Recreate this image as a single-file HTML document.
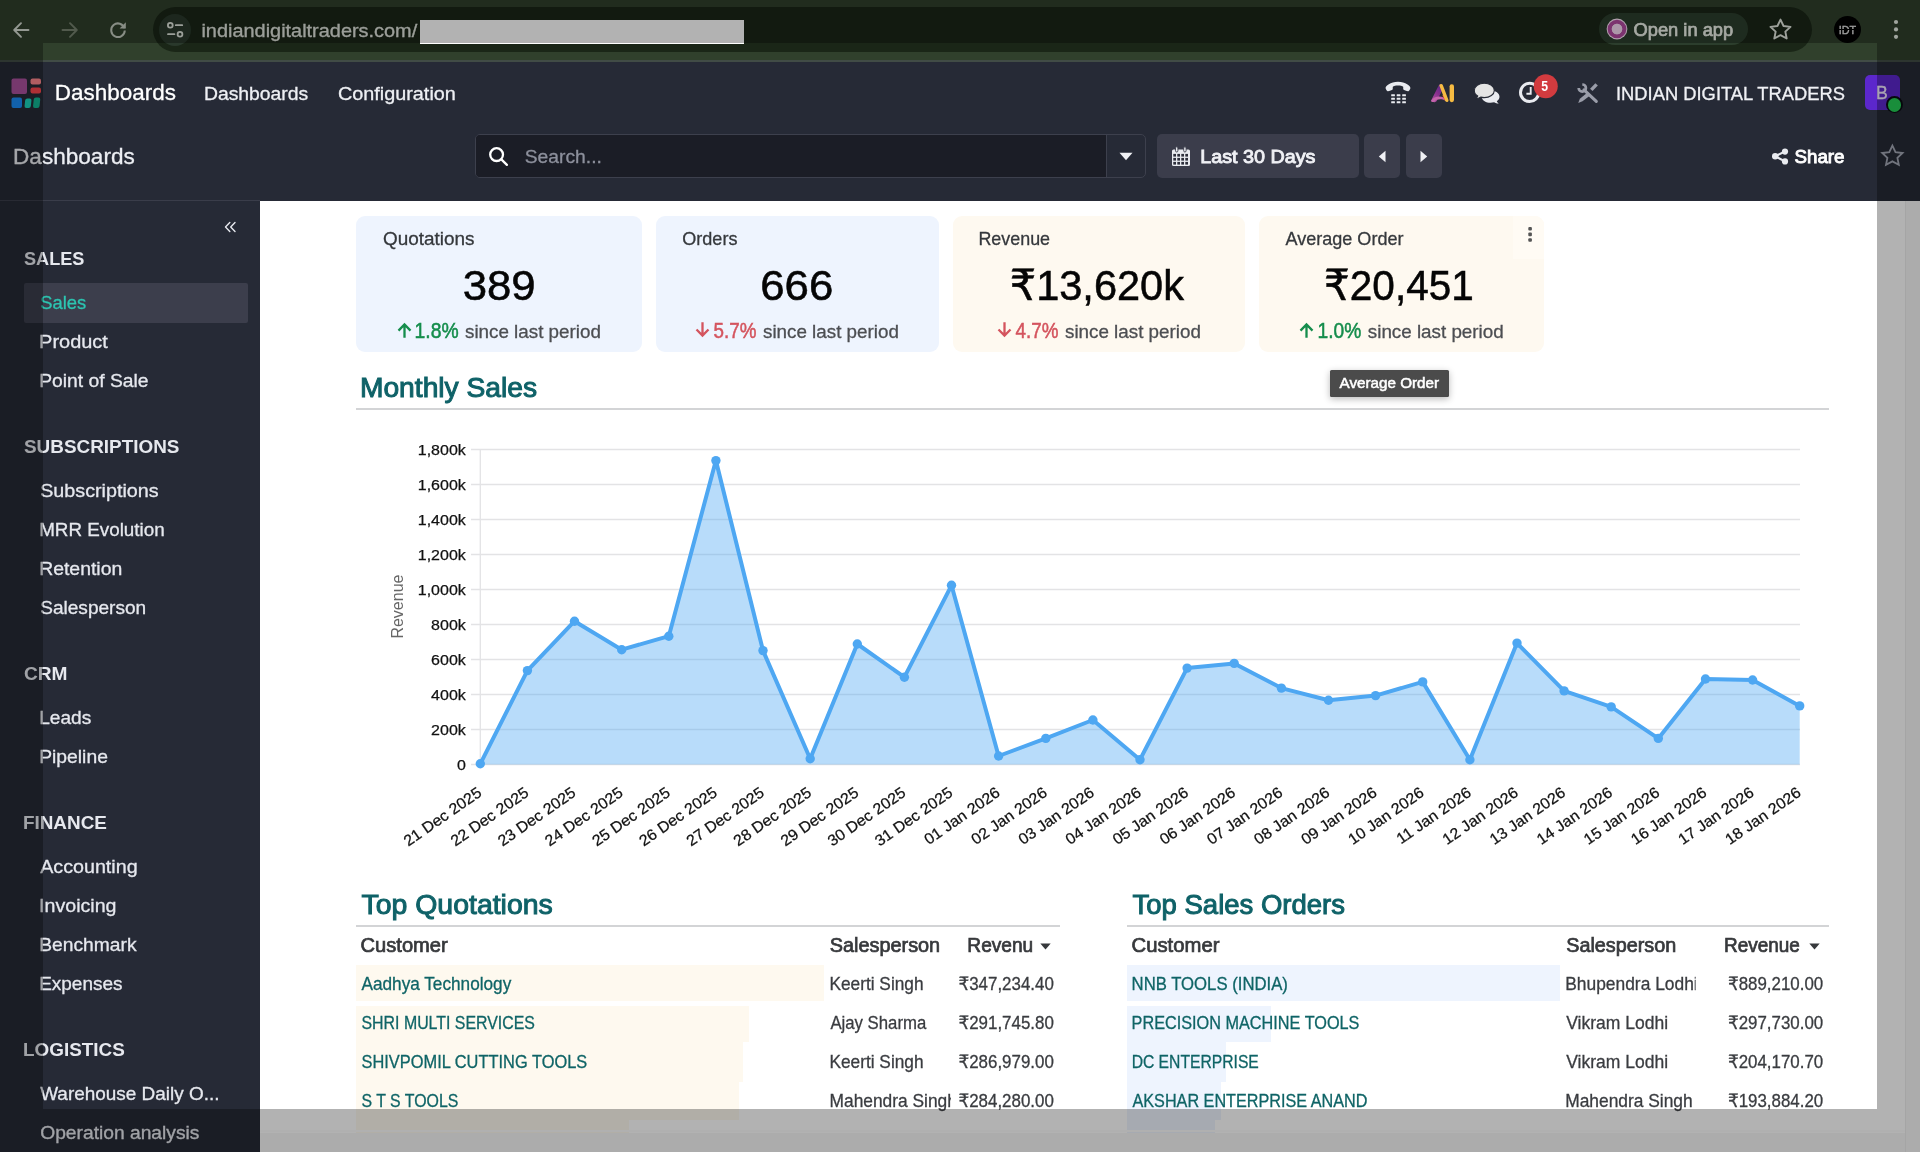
<!DOCTYPE html>
<html lang="en"><head><meta charset="utf-8"><title>Dashboards</title>
<style>
html,body{margin:0;padding:0}
body{width:1920px;height:1152px;overflow:hidden;position:relative;background:#fff;font-family:"Liberation Sans","DejaVu Sans",sans-serif}
.abs{position:absolute}
#txt text{white-space:pre}
svg.g{will-change:transform}
</style></head>
<body>
<div class="abs" style="left:0;top:0;width:1920px;height:61px;background:#30402c"></div>
<div class="abs" style="left:0;top:60px;width:1920px;height:2px;background:#414c46"></div>
<div class="abs" style="left:153px;top:7px;width:1659px;height:45px;border-radius:23px;background:#1a2617"></div>
<div class="abs" style="left:159px;top:14px;width:32px;height:32px;border-radius:16px;background:#2a392c"></div>
<svg class="abs" style="left:159px;top:14px" width="32" height="32" viewBox="0 0 32 32" fill="none" stroke="#dfe4dc" stroke-width="1.8" stroke-linecap="round"><circle cx="11.3" cy="11.2" r="2.4"/><path d="M16.8 11.2h6.4M9 20.2h6.4"/><circle cx="21" cy="20.2" r="2.4"/></svg>
<svg class="abs" style="left:11px;top:19px" width="22" height="22" viewBox="0 0 22 22" fill="none" stroke="#d5dbd2" stroke-width="1.9" stroke-linecap="round" stroke-linejoin="round"><path d="M17.5 11H3.5M10 4.2L3.2 11l6.8 6.8"/></svg>
<svg class="abs" style="left:58px;top:19px" width="22" height="22" viewBox="0 0 22 22" fill="none" stroke="#76826f" stroke-width="1.9" stroke-linecap="round" stroke-linejoin="round"><path d="M4.5 11h14M12 4.2l6.8 6.8-6.8 6.8"/></svg>
<svg class="abs" style="left:105.6px;top:17.9px" width="24" height="24" viewBox="0 0 24 24" fill="none" stroke="#c3cbbf" stroke-width="2" stroke-linecap="butt"><path d="M18.500 10.200A6.800 6.800 0 1 0 18.800 12.500"/><path d="M19.800 4.300v6.200h-6.200z" fill="#c3cbbf" stroke="none"/></svg>
<div class="abs" style="left:420px;top:19.5px;width:323.5px;height:24.5px;background:#fff"></div>
<div class="abs" style="left:1598.5px;top:13.3px;width:149px;height:32px;border-radius:16px;background:#2c3e2d"></div>
<svg class="abs" style="left:1604.6px;top:17.1px" width="24" height="24" viewBox="0 0 24 24"><circle cx="12" cy="12" r="10.4" fill="#fbe6f7"/><circle cx="12" cy="12" r="7.300" fill="none" stroke="#b24a9f" stroke-width="4.100"/><circle cx="12" cy="12" r="5.200" fill="#f6d9f2"/></svg>
<svg class="abs" style="left:1766.6px;top:15.8px" width="27" height="27" viewBox="0 0 24 24" fill="none" stroke="#e2e7df" stroke-width="1.7" stroke-linejoin="round"><path d="M12 3.2l2.7 5.7 6.2.8-4.6 4.2 1.2 6.1L12 17l-5.5 3 1.2-6.1-4.6-4.2 6.2-.8z"/></svg>
<div class="abs" style="left:1833.8px;top:15.5px;width:27.3px;height:27.3px;border-radius:14px;background:#000"></div>
<svg class="abs" style="left:1888.8px;top:17.1px" width="14" height="26" viewBox="0 0 14 26" fill="#e6ede2"><circle cx="7" cy="5" r="2.1"/><circle cx="7" cy="12.400" r="2.1"/><circle cx="7" cy="19.800" r="2.1"/></svg>
<div class="abs" style="left:0;top:62px;width:1920px;height:139px;background:#262a36"></div>
<div class="abs" style="left:0;top:199.9px;width:260px;height:1.7px;background:#3a3d4a"></div>
<svg class="abs" style="left:11px;top:78px" width="30" height="30" viewBox="0 0 30 30">
<rect x="0.5" y="0.5" width="15.5" height="15.5" rx="2" fill="#a9519c"/>
<rect x="19.5" y="0.5" width="10.5" height="6" rx="2" fill="#fc868b"/>
<rect x="19.5" y="9.5" width="10.5" height="6" rx="2" fill="#f9464c"/>
<rect x="0.5" y="19.5" width="10.5" height="10.5" rx="2" fill="#1a8cf5"/>
<rect x="14" y="20.5" width="6.3" height="9.5" rx="2" fill="#1ad3bb" transform="skewX(-6) translate(2.5 0)"/>
<rect x="22.5" y="19.5" width="6.5" height="10.5" rx="2" fill="#12b592" transform="skewX(-6) translate(2.5 0)"/>
</svg>
<div class="abs" style="left:1865.3px;top:75px;width:34.8px;height:35.4px;border-radius:5px;background:#5c27cc"></div>
<div class="abs" style="left:1885.8px;top:96.2px;width:17.2px;height:17.2px;border-radius:9px;background:#0a0c12"></div>
<div class="abs" style="left:1887.6px;top:98px;width:13.6px;height:13.6px;border-radius:7px;background:#25cc55"></div>
<svg class="abs" style="left:1384px;top:80px" width="28" height="25" viewBox="0 0 28 25" fill="#e9ebf0"><path d="M1.6 8.3C1.2 6.2 6.5 1.8 14 1.8s12.8 4.4 12.4 6.5c-.2 1-1.2 2.4-2 2.9-.7.4-4.6-1-5-1.6-.4-.7.1-2.6-.4-3.1-.7-.7-2.8-1.1-5-1.1s-4.300.4-5 1.100c-.5.5 0 2.400-.4 3.100-.4.600-4.300 2-5 1.600-.8-.5-1.800-1.900-2-2.900z"/><rect x="7.2" y="14.2" width="3.7" height="2.1" rx="0.4"/><rect x="12.7" y="14.2" width="3.7" height="2.1" rx="0.4"/><rect x="18.2" y="14.2" width="3.7" height="2.1" rx="0.4"/><rect x="7.2" y="17.7" width="3.7" height="2.1" rx="0.4"/><rect x="12.7" y="17.7" width="3.7" height="2.1" rx="0.4"/><rect x="18.2" y="17.7" width="3.7" height="2.1" rx="0.4"/><rect x="7.2" y="21.2" width="3.7" height="2.1" rx="0.4"/><rect x="12.7" y="21.2" width="3.7" height="2.1" rx="0.4"/><rect x="18.2" y="21.2" width="3.7" height="2.1" rx="0.4"/></svg>
<svg class="abs" style="left:1430px;top:82px" width="26" height="22" viewBox="0 0 26 22">
<defs><linearGradient id="aig" x1="0" y1="1" x2="0.7" y2="0"><stop offset="0" stop-color="#b85aa6"/><stop offset="0.55" stop-color="#8a2f8e"/><stop offset="1" stop-color="#5a2a86"/></linearGradient></defs>
<path d="M1 18.8L9.2 2.6c.5-.9 1.600-.9 2 0l2 4-6.500 12.500c-.6 1-2 1.300-3.200.8-1.200-.5-1.900-.8-2.500-1.100z" fill="url(#aig)"/>
<path d="M1.300 18.500c2.500-3.300 7-5.200 12.500-3l1.800 3.300c-4.800-2.300-8.600-1.700-11.300.9-.9.800-3.800.2-3-1.200z" fill="#c565ab"/>
<path d="M12.300 13.600l2.800 5.300 1.700-.5-2.800-6.600z" fill="#d8433a"/>
<path d="M9.300 3.400c.4-1.600 2.800-2 3.500-.5l5.600 14.800c.4 1.100-.2 2-1.200 2.200-.9.200-1.700-.3-2-1.100z" fill="#f6bb42"/>
<rect x="19.600" y="2.200" width="4.400" height="18" rx="2.100" fill="#f6bb42"/>
</svg>
<svg class="abs" style="left:1473px;top:82px" width="28" height="23" viewBox="0 0 28 23">
<path d="M17.500 8.500c5 0 9 2.700 9 6.300 0 1.800-1 3.400-2.700 4.500.4 1 1.100 1.800 1.900 2.400-1.700 0-3.300-.5-4.600-1.400-1.100.3-2.300.5-3.600.5-4.500 0-8.200-2.300-8.900-5.300z" fill="#e9ebf0"/>
<path d="M11.300 1.200c5.500 0 10 3.200 10 7.200s-4.500 7.200-10 7.200c-1.300 0-2.500-.2-3.600-.5-1.400 1-3.100 1.600-5 1.600.9-.7 1.600-1.600 2-2.700C2.600 12.700 1.300 10.700 1.300 8.400c0-4 4.500-7.200 10-7.200z" fill="#e4e4e4" stroke="#262a36" stroke-width="1.100"/>
</svg>
<svg class="abs" style="left:1517px;top:72px" width="44" height="36" viewBox="0 0 44 36">
<circle cx="12.600" cy="20.400" r="9.100" fill="none" stroke="#e9ebf0" stroke-width="3"/>
<path d="M13.700 15v6.700H9.400" fill="none" stroke="#e9ebf0" stroke-width="1.900"/>
<circle cx="28.750" cy="14.200" r="12" fill="#d23b3f"/>
</svg>
<svg class="abs" style="left:1576px;top:82px" width="24" height="22" viewBox="0 0 24 22" fill="none" stroke="#9a9da9">
<path d="M8 7.800L20.300 19.400" stroke-width="3.100" stroke-linecap="round"/>
<path d="M6.300 2.500A3.600 3.600 0 1 1 2.700 6.100" stroke-width="2.700"/>
<path d="M20.600 2.300l-5.300 5.600" stroke-width="3.400"/>
<path d="M11.800 10.300l3 2.600-8.300 6.300-4.300 1.900 1.700-4.400z" fill="#9a9da9" stroke="none"/>
</svg>
<div class="abs" style="left:475px;top:134px;width:671px;height:44px;border-radius:5px;border:1px solid #3d404d;box-sizing:border-box;background:#262a36"></div>
<div class="abs" style="left:476px;top:135px;width:630px;height:42px;border-radius:4px 0 0 4px;background:#1b1d26"></div>
<div class="abs" style="left:1106px;top:135px;width:1px;height:42px;background:#3d404d"></div>
<svg class="abs" style="left:488px;top:146px" width="21" height="21" viewBox="0 0 21 21" fill="none" stroke="#fff" stroke-width="2.3" stroke-linecap="round"><circle cx="8.6" cy="8.6" r="6.4"/><path d="M13.6 13.6l5.3 5.3"/></svg>
<svg class="abs" style="left:1119px;top:152px" width="14" height="9" viewBox="0 0 14 9" fill="#f0f1f5"><path d="M0.5 0.8h13L7 8.2z"/></svg>
<div class="abs" style="left:1157px;top:134px;width:201.5px;height:44px;border-radius:5px;background:#3b3d4b"></div>
<div class="abs" style="left:1364px;top:134px;width:36px;height:44px;border-radius:5px;background:#3b3d4b"></div>
<div class="abs" style="left:1405.5px;top:134px;width:36px;height:44px;border-radius:5px;background:#3b3d4b"></div>
<svg class="abs" style="left:1378px;top:150px" width="8" height="13" viewBox="0 0 8 13" fill="#f0f1f5"><path d="M7.5 0.7v11.6L0.8 6.5z"/></svg>
<svg class="abs" style="left:1420px;top:150px" width="8" height="13" viewBox="0 0 8 13" fill="#f0f1f5"><path d="M0.5 0.7v11.6L7.2 6.5z"/></svg>
<svg class="abs" style="left:1170px;top:145px" width="22" height="23" viewBox="0 0 22 23"><rect x="2" y="4.500" width="18" height="16.600" rx="1.500" fill="#e9ebf0"/><rect x="5.500" y="1.800" width="2.400" height="5.200" rx="1.200" fill="#e9ebf0" stroke="#3b3d4b" stroke-width="0.900"/><rect x="13.700" y="1.800" width="2.400" height="5.200" rx="1.200" fill="#e9ebf0" stroke="#3b3d4b" stroke-width="0.900"/><rect x="3.3" y="8.9" width="2.700" height="2.700" fill="#2c2e3a"/><rect x="7.3" y="8.9" width="2.700" height="2.700" fill="#2c2e3a"/><rect x="11.3" y="8.9" width="2.700" height="2.700" fill="#2c2e3a"/><rect x="15.3" y="8.9" width="2.700" height="2.700" fill="#2c2e3a"/><rect x="3.3" y="12.9" width="2.700" height="2.700" fill="#2c2e3a"/><rect x="7.3" y="12.9" width="2.700" height="2.700" fill="#2c2e3a"/><rect x="11.3" y="12.9" width="2.700" height="2.700" fill="#2c2e3a"/><rect x="15.3" y="12.9" width="2.700" height="2.700" fill="#2c2e3a"/><rect x="3.3" y="16.9" width="2.700" height="2.700" fill="#2c2e3a"/><rect x="7.3" y="16.9" width="2.700" height="2.700" fill="#2c2e3a"/><rect x="11.3" y="16.9" width="2.700" height="2.700" fill="#2c2e3a"/><rect x="15.3" y="16.9" width="2.700" height="2.700" fill="#2c2e3a"/></svg>
<svg class="abs" style="left:1770px;top:146px" width="20" height="21" viewBox="0 0 20 21"><path d="M5.200 10.200L15 5.600M5.200 10.200L15 15.400" stroke="#e9ebf0" stroke-width="2.200" fill="none"/><circle cx="5.200" cy="10.200" r="3.200" fill="#e9ebf0"/><circle cx="15" cy="5.600" r="3.100" fill="#e9ebf0"/><circle cx="15" cy="15.400" r="3.100" fill="#e9ebf0"/></svg>
<svg class="abs" style="left:1879px;top:142px" width="27" height="27" viewBox="0 0 27 27" fill="none" stroke="#a3a7b4" stroke-width="1.800" stroke-linejoin="miter"><path d="M13.400 3.600l3.100 6.500 7.100.9-5.200 4.900 1.400 7-6.400-3.500-6.400 3.500 1.400-7-5.200-4.900 7.100-.9z"/></svg>
<div class="abs" style="left:0;top:201px;width:260px;height:951px;background:#262a36"></div>
<div class="abs" style="left:24px;top:283px;width:224px;height:39.5px;border-radius:2px;background:#3c3e4c"></div>
<svg class="abs" style="left:224px;top:221px" width="13" height="12" viewBox="0 0 13 12" fill="none" stroke="#e6e8ee" stroke-width="1.4" stroke-linecap="round" stroke-linejoin="round"><path d="M5.8 1.5L1.5 6l4.3 4.5M11 1.5L6.7 6l4.3 4.5"/></svg>
<div class="abs" style="left:260px;top:200.8px;width:1660px;height:951.2px;background:#fff"></div>
<div class="abs" style="left:356px;top:216px;width:286px;height:136px;border-radius:9px;background:#eef4fe"></div>
<div class="abs" style="left:655.5px;top:216px;width:283.5px;height:136px;border-radius:9px;background:#eef4fe"></div>
<div class="abs" style="left:953px;top:216px;width:292px;height:136px;border-radius:9px;background:#fef9f0"></div>
<div class="abs" style="left:1259px;top:216px;width:285px;height:136px;border-radius:9px;background:#fef9f0"></div>
<svg class="abs" style="left:396.5px;top:321.6px" width="15" height="16" viewBox="0 0 15 16" fill="none" stroke="#158d4c" stroke-width="2.3" stroke-linecap="butt" stroke-linejoin="miter"><path d="M7.5 15.8V2.5M1.5 8.600l6-6.100 6 6.100"/></svg>
<svg class="abs" style="left:694.5px;top:321.6px" width="15" height="16" viewBox="0 0 15 16" fill="none" stroke="#d4545e" stroke-width="2.3" stroke-linecap="butt" stroke-linejoin="miter"><path d="M7.5 0.300v13.300M1.500 7.500l6 6.100 6-6.100"/></svg>
<svg class="abs" style="left:996.5px;top:321.6px" width="15" height="16" viewBox="0 0 15 16" fill="none" stroke="#d4545e" stroke-width="2.3" stroke-linecap="butt" stroke-linejoin="miter"><path d="M7.5 0.300v13.300M1.500 7.500l6 6.100 6-6.100"/></svg>
<svg class="abs" style="left:1299.4px;top:321.6px" width="15" height="16" viewBox="0 0 15 16" fill="none" stroke="#158d4c" stroke-width="2.3" stroke-linecap="butt" stroke-linejoin="miter"><path d="M7.5 15.8V2.5M1.5 8.600l6-6.100 6 6.100"/></svg>
<div class="abs" style="left:1513px;top:216px;width:30.8px;height:42.5px;border-radius:0 9px 0 0;background:#fffbf4"></div>
<svg class="abs" style="left:1526px;top:225px" width="8" height="19" viewBox="0 0 8 19" fill="#555"><rect x="2.3" y="2" width="3.6" height="3.6" rx="1"/><rect x="2.3" y="7.6" width="3.6" height="3.6" rx="1"/><rect x="2.3" y="13.2" width="3.6" height="3.6" rx="1"/></svg>
<div class="abs" style="left:356px;top:408.2px;width:1473px;height:1.5px;background:#d3d4d6"></div>
<div class="abs" style="left:1330px;top:370px;width:119px;height:26.6px;border-radius:1.5px;background:#4b4b4b;box-shadow:0 2px 7px rgba(0,0,0,.28)"></div>
<svg class="abs g" style="left:0;top:0" width="1920" height="1152" viewBox="0 0 1920 1152" font-family='"Liberation Sans",sans-serif'>
<path d="M471 449.5H1800" stroke="#e3e3e5" stroke-width="1.3"/>
<path d="M471 484.5H1800" stroke="#e3e3e5" stroke-width="1.3"/>
<path d="M471 519.5H1800" stroke="#e3e3e5" stroke-width="1.3"/>
<path d="M471 554.5H1800" stroke="#e3e3e5" stroke-width="1.3"/>
<path d="M471 589.5H1800" stroke="#e3e3e5" stroke-width="1.3"/>
<path d="M471 624.5H1800" stroke="#e3e3e5" stroke-width="1.3"/>
<path d="M471 659.5H1800" stroke="#e3e3e5" stroke-width="1.3"/>
<path d="M471 694.5H1800" stroke="#e3e3e5" stroke-width="1.3"/>
<path d="M471 729.5H1800" stroke="#e3e3e5" stroke-width="1.3"/>
<path d="M471 764.5H1800" stroke="#e3e3e5" stroke-width="1.3"/>
<path d="M480.3 449.5V764.5" stroke="#e3e3e5" stroke-width="1.3"/>
<polygon points="480.3,764.5 480.3,763.8 527.4,670.6 574.5,621.2 621.7,649.7 668.8,636.2 715.9,460.6 763.0,650.6 810.2,758.8 857.3,644.0 904.4,677.2 951.5,585.3 998.6,756.0 1045.8,738.4 1092.9,720.0 1140.0,759.7 1187.1,668.1 1234.2,663.4 1281.4,688.1 1328.5,700.3 1375.6,695.6 1422.7,681.9 1469.9,759.7 1517.0,643.1 1564.1,690.9 1611.2,706.9 1658.3,738.4 1705.5,679.0 1752.6,680.0 1799.7,705.9 1799.7,764.5" fill="#4ea7f2" fill-opacity="0.4"/>
<polyline points="480.3,763.8 527.4,670.6 574.5,621.2 621.7,649.7 668.8,636.2 715.9,460.6 763.0,650.6 810.2,758.8 857.3,644.0 904.4,677.2 951.5,585.3 998.6,756.0 1045.8,738.4 1092.9,720.0 1140.0,759.7 1187.1,668.1 1234.2,663.4 1281.4,688.1 1328.5,700.3 1375.6,695.6 1422.7,681.9 1469.9,759.7 1517.0,643.1 1564.1,690.9 1611.2,706.9 1658.3,738.4 1705.5,679.0 1752.6,680.0 1799.7,705.9" fill="none" stroke="#4ea7f2" stroke-width="4" stroke-linejoin="round" stroke-linecap="round"/>
<circle cx="480.3" cy="763.8" r="4.7" fill="#4ea7f2"/>
<circle cx="527.4" cy="670.6" r="4.7" fill="#4ea7f2"/>
<circle cx="574.5" cy="621.2" r="4.7" fill="#4ea7f2"/>
<circle cx="621.7" cy="649.7" r="4.7" fill="#4ea7f2"/>
<circle cx="668.8" cy="636.2" r="4.7" fill="#4ea7f2"/>
<circle cx="715.9" cy="460.6" r="4.7" fill="#4ea7f2"/>
<circle cx="763.0" cy="650.6" r="4.7" fill="#4ea7f2"/>
<circle cx="810.2" cy="758.8" r="4.7" fill="#4ea7f2"/>
<circle cx="857.3" cy="644.0" r="4.7" fill="#4ea7f2"/>
<circle cx="904.4" cy="677.2" r="4.7" fill="#4ea7f2"/>
<circle cx="951.5" cy="585.3" r="4.7" fill="#4ea7f2"/>
<circle cx="998.6" cy="756.0" r="4.7" fill="#4ea7f2"/>
<circle cx="1045.8" cy="738.4" r="4.7" fill="#4ea7f2"/>
<circle cx="1092.9" cy="720.0" r="4.7" fill="#4ea7f2"/>
<circle cx="1140.0" cy="759.7" r="4.7" fill="#4ea7f2"/>
<circle cx="1187.1" cy="668.1" r="4.7" fill="#4ea7f2"/>
<circle cx="1234.2" cy="663.4" r="4.7" fill="#4ea7f2"/>
<circle cx="1281.4" cy="688.1" r="4.7" fill="#4ea7f2"/>
<circle cx="1328.5" cy="700.3" r="4.7" fill="#4ea7f2"/>
<circle cx="1375.6" cy="695.6" r="4.7" fill="#4ea7f2"/>
<circle cx="1422.7" cy="681.9" r="4.7" fill="#4ea7f2"/>
<circle cx="1469.9" cy="759.7" r="4.7" fill="#4ea7f2"/>
<circle cx="1517.0" cy="643.1" r="4.7" fill="#4ea7f2"/>
<circle cx="1564.1" cy="690.9" r="4.7" fill="#4ea7f2"/>
<circle cx="1611.2" cy="706.9" r="4.7" fill="#4ea7f2"/>
<circle cx="1658.3" cy="738.4" r="4.7" fill="#4ea7f2"/>
<circle cx="1705.5" cy="679.0" r="4.7" fill="#4ea7f2"/>
<circle cx="1752.6" cy="680.0" r="4.7" fill="#4ea7f2"/>
<circle cx="1799.7" cy="705.9" r="4.7" fill="#4ea7f2"/>
<text x="465.8" y="454.8" font-size="15.4" textLength="48.04" lengthAdjust="spacingAndGlyphs" text-anchor="end" fill="#111" stroke="#111" stroke-width="0.25">1,800k</text>
<text x="465.8" y="489.8" font-size="15.4" textLength="48.04" lengthAdjust="spacingAndGlyphs" text-anchor="end" fill="#111" stroke="#111" stroke-width="0.25">1,600k</text>
<text x="465.8" y="524.8" font-size="15.4" textLength="48.04" lengthAdjust="spacingAndGlyphs" text-anchor="end" fill="#111" stroke="#111" stroke-width="0.25">1,400k</text>
<text x="465.8" y="559.8" font-size="15.4" textLength="48.04" lengthAdjust="spacingAndGlyphs" text-anchor="end" fill="#111" stroke="#111" stroke-width="0.25">1,200k</text>
<text x="465.8" y="594.8" font-size="15.4" textLength="48.04" lengthAdjust="spacingAndGlyphs" text-anchor="end" fill="#111" stroke="#111" stroke-width="0.25">1,000k</text>
<text x="465.8" y="629.8" font-size="15.4" textLength="34.70" lengthAdjust="spacingAndGlyphs" text-anchor="end" fill="#111" stroke="#111" stroke-width="0.25">800k</text>
<text x="465.8" y="664.8" font-size="15.4" textLength="34.70" lengthAdjust="spacingAndGlyphs" text-anchor="end" fill="#111" stroke="#111" stroke-width="0.25">600k</text>
<text x="465.8" y="699.8" font-size="15.4" textLength="34.70" lengthAdjust="spacingAndGlyphs" text-anchor="end" fill="#111" stroke="#111" stroke-width="0.25">400k</text>
<text x="465.8" y="734.8" font-size="15.4" textLength="34.70" lengthAdjust="spacingAndGlyphs" text-anchor="end" fill="#111" stroke="#111" stroke-width="0.25">200k</text>
<text x="465.8" y="769.8" font-size="15.4" textLength="8.90" lengthAdjust="spacingAndGlyphs" text-anchor="end" fill="#111" stroke="#111" stroke-width="0.25">0</text>
<text transform="translate(403.2 606.6) rotate(-90)" font-size="16" text-anchor="middle" fill="#666">Revenue</text>
<text transform="translate(482.7 795) rotate(-34.8)" font-size="15.4" textLength="90.73" lengthAdjust="spacingAndGlyphs" text-anchor="end" fill="#111" stroke="#111" stroke-width="0.25">21 Dec 2025</text>
<text transform="translate(529.8 795) rotate(-34.8)" font-size="15.4" textLength="90.73" lengthAdjust="spacingAndGlyphs" text-anchor="end" fill="#111" stroke="#111" stroke-width="0.25">22 Dec 2025</text>
<text transform="translate(576.9 795) rotate(-34.8)" font-size="15.4" textLength="90.73" lengthAdjust="spacingAndGlyphs" text-anchor="end" fill="#111" stroke="#111" stroke-width="0.25">23 Dec 2025</text>
<text transform="translate(624.1 795) rotate(-34.8)" font-size="15.4" textLength="90.73" lengthAdjust="spacingAndGlyphs" text-anchor="end" fill="#111" stroke="#111" stroke-width="0.25">24 Dec 2025</text>
<text transform="translate(671.2 795) rotate(-34.8)" font-size="15.4" textLength="90.73" lengthAdjust="spacingAndGlyphs" text-anchor="end" fill="#111" stroke="#111" stroke-width="0.25">25 Dec 2025</text>
<text transform="translate(718.3 795) rotate(-34.8)" font-size="15.4" textLength="90.73" lengthAdjust="spacingAndGlyphs" text-anchor="end" fill="#111" stroke="#111" stroke-width="0.25">26 Dec 2025</text>
<text transform="translate(765.4 795) rotate(-34.8)" font-size="15.4" textLength="90.73" lengthAdjust="spacingAndGlyphs" text-anchor="end" fill="#111" stroke="#111" stroke-width="0.25">27 Dec 2025</text>
<text transform="translate(812.6 795) rotate(-34.8)" font-size="15.4" textLength="90.73" lengthAdjust="spacingAndGlyphs" text-anchor="end" fill="#111" stroke="#111" stroke-width="0.25">28 Dec 2025</text>
<text transform="translate(859.7 795) rotate(-34.8)" font-size="15.4" textLength="90.73" lengthAdjust="spacingAndGlyphs" text-anchor="end" fill="#111" stroke="#111" stroke-width="0.25">29 Dec 2025</text>
<text transform="translate(906.8 795) rotate(-34.8)" font-size="15.4" textLength="90.73" lengthAdjust="spacingAndGlyphs" text-anchor="end" fill="#111" stroke="#111" stroke-width="0.25">30 Dec 2025</text>
<text transform="translate(953.9 795) rotate(-34.8)" font-size="15.4" textLength="90.73" lengthAdjust="spacingAndGlyphs" text-anchor="end" fill="#111" stroke="#111" stroke-width="0.25">31 Dec 2025</text>
<text transform="translate(1001.0 795) rotate(-34.8)" font-size="15.4" textLength="88.08" lengthAdjust="spacingAndGlyphs" text-anchor="end" fill="#111" stroke="#111" stroke-width="0.25">01 Jan 2026</text>
<text transform="translate(1048.2 795) rotate(-34.8)" font-size="15.4" textLength="88.08" lengthAdjust="spacingAndGlyphs" text-anchor="end" fill="#111" stroke="#111" stroke-width="0.25">02 Jan 2026</text>
<text transform="translate(1095.3 795) rotate(-34.8)" font-size="15.4" textLength="88.08" lengthAdjust="spacingAndGlyphs" text-anchor="end" fill="#111" stroke="#111" stroke-width="0.25">03 Jan 2026</text>
<text transform="translate(1142.4 795) rotate(-34.8)" font-size="15.4" textLength="88.08" lengthAdjust="spacingAndGlyphs" text-anchor="end" fill="#111" stroke="#111" stroke-width="0.25">04 Jan 2026</text>
<text transform="translate(1189.5 795) rotate(-34.8)" font-size="15.4" textLength="88.08" lengthAdjust="spacingAndGlyphs" text-anchor="end" fill="#111" stroke="#111" stroke-width="0.25">05 Jan 2026</text>
<text transform="translate(1236.6 795) rotate(-34.8)" font-size="15.4" textLength="88.08" lengthAdjust="spacingAndGlyphs" text-anchor="end" fill="#111" stroke="#111" stroke-width="0.25">06 Jan 2026</text>
<text transform="translate(1283.8 795) rotate(-34.8)" font-size="15.4" textLength="88.08" lengthAdjust="spacingAndGlyphs" text-anchor="end" fill="#111" stroke="#111" stroke-width="0.25">07 Jan 2026</text>
<text transform="translate(1330.9 795) rotate(-34.8)" font-size="15.4" textLength="88.08" lengthAdjust="spacingAndGlyphs" text-anchor="end" fill="#111" stroke="#111" stroke-width="0.25">08 Jan 2026</text>
<text transform="translate(1378.0 795) rotate(-34.8)" font-size="15.4" textLength="88.08" lengthAdjust="spacingAndGlyphs" text-anchor="end" fill="#111" stroke="#111" stroke-width="0.25">09 Jan 2026</text>
<text transform="translate(1425.1 795) rotate(-34.8)" font-size="15.4" textLength="88.08" lengthAdjust="spacingAndGlyphs" text-anchor="end" fill="#111" stroke="#111" stroke-width="0.25">10 Jan 2026</text>
<text transform="translate(1472.3 795) rotate(-34.8)" font-size="15.4" textLength="86.89" lengthAdjust="spacingAndGlyphs" text-anchor="end" fill="#111" stroke="#111" stroke-width="0.25">11 Jan 2026</text>
<text transform="translate(1519.4 795) rotate(-34.8)" font-size="15.4" textLength="88.08" lengthAdjust="spacingAndGlyphs" text-anchor="end" fill="#111" stroke="#111" stroke-width="0.25">12 Jan 2026</text>
<text transform="translate(1566.5 795) rotate(-34.8)" font-size="15.4" textLength="88.08" lengthAdjust="spacingAndGlyphs" text-anchor="end" fill="#111" stroke="#111" stroke-width="0.25">13 Jan 2026</text>
<text transform="translate(1613.6 795) rotate(-34.8)" font-size="15.4" textLength="88.08" lengthAdjust="spacingAndGlyphs" text-anchor="end" fill="#111" stroke="#111" stroke-width="0.25">14 Jan 2026</text>
<text transform="translate(1660.7 795) rotate(-34.8)" font-size="15.4" textLength="88.08" lengthAdjust="spacingAndGlyphs" text-anchor="end" fill="#111" stroke="#111" stroke-width="0.25">15 Jan 2026</text>
<text transform="translate(1707.9 795) rotate(-34.8)" font-size="15.4" textLength="88.08" lengthAdjust="spacingAndGlyphs" text-anchor="end" fill="#111" stroke="#111" stroke-width="0.25">16 Jan 2026</text>
<text transform="translate(1755.0 795) rotate(-34.8)" font-size="15.4" textLength="88.08" lengthAdjust="spacingAndGlyphs" text-anchor="end" fill="#111" stroke="#111" stroke-width="0.25">17 Jan 2026</text>
<text transform="translate(1802.1 795) rotate(-34.8)" font-size="15.4" textLength="88.08" lengthAdjust="spacingAndGlyphs" text-anchor="end" fill="#111" stroke="#111" stroke-width="0.25">18 Jan 2026</text>
</svg>
<div class="abs" style="left:356px;top:925.3px;width:704px;height:1.5px;background:#d3d4d6"></div>
<div class="abs" style="left:1126.5px;top:925.3px;width:702.5px;height:1.5px;background:#d3d4d6"></div>
<div class="abs clip" style="left:960px;top:930px;width:74px;height:34px"></div>
<svg class="abs" style="left:1039.5px;top:943px" width="11" height="7" viewBox="0 0 11 7" fill="#37393c"><path d="M0.3 0.5h10.4L5.5 6.5z"/></svg>
<svg class="abs" style="left:1809px;top:943px" width="11" height="7" viewBox="0 0 11 7" fill="#37393c"><path d="M0.3 0.5h10.4L5.5 6.5z"/></svg>
<div class="abs" style="left:356px;top:965.3px;width:467.8px;height:36.0px;background:#fef9ef"></div>
<div class="abs" style="left:1126.5px;top:965.3px;width:433.5px;height:36.0px;background:#eef4fe"></div>
<div class="abs" style="left:356px;top:1006px;width:393.0px;height:36.0px;background:#fef9ef"></div>
<div class="abs" style="left:1126.5px;top:1006px;width:144.9px;height:36.0px;background:#eef4fe"></div>
<div class="abs" style="left:356px;top:1042px;width:386.6px;height:39.5px;background:#fef9ef"></div>
<div class="abs" style="left:1126.5px;top:1042px;width:99.5px;height:39.5px;background:#eef4fe"></div>
<div class="abs" style="left:356px;top:1081.5px;width:383.0px;height:38.5px;background:#fef9ef"></div>
<div class="abs" style="left:1126.5px;top:1081.5px;width:94.2px;height:38.5px;background:#eef4fe"></div>
<div class="abs" style="left:356px;top:1120px;width:273.0px;height:20.0px;background:#fef9ef"></div>
<div class="abs" style="left:1126.5px;top:1120px;width:88.3px;height:20.0px;background:#eef4fe"></div>
<div class="abs" style="left:260px;top:1130.3px;width:1660px;height:2.2px;background:#fdfdfd"></div><div class="abs" style="left:260px;top:1132.5px;width:1660px;height:20px;background:#f7f7f7"></div>
<div class="abs" style="left:1905px;top:201px;width:15px;height:951px;background:#f6f6f6;border-left:1px solid #ececec;box-sizing:border-box"></div>
<svg id="txt" class="abs g" style="left:0;top:0" width="1920" height="1152" viewBox="0 0 1920 1152" font-family='"Liberation Sans","DejaVu Sans",sans-serif'>
<defs><clipPath id="cpRev"><rect x="900" y="900" width="132.8" height="100"/></clipPath><clipPath id="cpMah"><rect x="800" y="1050" width="150.9" height="100"/></clipPath><clipPath id="cpBhu"><rect x="1500" y="950" width="195.6" height="100"/></clipPath></defs>
<text x="201.45" y="36.50" textLength="215.79" lengthAdjust="spacingAndGlyphs" font-size="19" fill="#dfe3dc" stroke="#dfe3dc" stroke-width="0.30">indiandigitaltraders.com/</text>
<text x="1633.50" y="36.40" textLength="99.71" lengthAdjust="spacingAndGlyphs" font-size="18" fill="#eef2ea" stroke="#eef2ea" stroke-width="0.65">Open in app</text>
<text x="1838.66" y="33.70" textLength="17.47" lengthAdjust="spacingAndGlyphs" font-size="11.5" fill="#e2e2e2" stroke="#e2e2e2" stroke-width="0.30">IDT</text>
<text x="54.88" y="100.30" textLength="121.12" lengthAdjust="spacingAndGlyphs" font-size="22" fill="#ffffff" stroke="#ffffff" stroke-width="0.30">Dashboards</text>
<text x="203.95" y="100.00" textLength="104.31" lengthAdjust="spacingAndGlyphs" font-size="18.5" fill="#eef0f4" stroke="#eef0f4" stroke-width="0.30">Dashboards</text>
<text x="338.00" y="100.00" textLength="117.81" lengthAdjust="spacingAndGlyphs" font-size="18.5" fill="#eef0f4" stroke="#eef0f4" stroke-width="0.30">Configuration</text>
<text x="1616.01" y="99.50" textLength="229.02" lengthAdjust="spacingAndGlyphs" font-size="18.5" fill="#f0f1f5" stroke="#f0f1f5" stroke-width="0.30">INDIAN DIGITAL TRADERS</text>
<text x="1876.12" y="98.90" textLength="11.79" lengthAdjust="spacingAndGlyphs" font-size="18" fill="#f1e9ff" stroke="#f1e9ff" stroke-width="0.30">B</text>
<text x="13.09" y="164.20" textLength="121.66" lengthAdjust="spacingAndGlyphs" font-size="22.3" fill="#eceef3" stroke="#eceef3" stroke-width="0.30">Dashboards</text>
<text x="524.70" y="163.00" textLength="77.19" lengthAdjust="spacingAndGlyphs" font-size="18.5" fill="#8d909c" stroke="#8d909c" stroke-width="0.30">Search...</text>
<text x="1200.16" y="163.20" textLength="115.36" lengthAdjust="spacingAndGlyphs" font-size="19" fill="#f0f1f5" stroke="#f0f1f5" stroke-width="0.90">Last 30 Days</text>
<text x="1794.40" y="162.60" textLength="50.16" lengthAdjust="spacingAndGlyphs" font-size="19" fill="#ffffff" stroke="#ffffff" stroke-width="0.90">Share</text>
<text x="24.00" y="265.00" textLength="60.41" lengthAdjust="spacingAndGlyphs" font-size="18" fill="#e6e8ee" font-weight="700">SALES</text>
<text x="40.20" y="309.20" textLength="46.05" lengthAdjust="spacingAndGlyphs" font-size="18.5" fill="#2cc5b1" stroke="#2cc5b1" stroke-width="0.30">Sales</text>
<text x="39.12" y="348.30" textLength="68.73" lengthAdjust="spacingAndGlyphs" font-size="18.5" fill="#e6e8ee" stroke="#e6e8ee" stroke-width="0.30">Product</text>
<text x="39.16" y="387.30" textLength="109.44" lengthAdjust="spacingAndGlyphs" font-size="18.5" fill="#e6e8ee" stroke="#e6e8ee" stroke-width="0.30">Point of Sale</text>
<text x="24.00" y="453.00" textLength="155.41" lengthAdjust="spacingAndGlyphs" font-size="18" fill="#e6e8ee" font-weight="700">SUBSCRIPTIONS</text>
<text x="40.20" y="497.00" textLength="118.47" lengthAdjust="spacingAndGlyphs" font-size="18.5" fill="#e6e8ee" stroke="#e6e8ee" stroke-width="0.30">Subscriptions</text>
<text x="39.18" y="536.00" textLength="125.51" lengthAdjust="spacingAndGlyphs" font-size="18.5" fill="#e6e8ee" stroke="#e6e8ee" stroke-width="0.30">MRR Evolution</text>
<text x="39.15" y="575.00" textLength="83.15" lengthAdjust="spacingAndGlyphs" font-size="18.5" fill="#e6e8ee" stroke="#e6e8ee" stroke-width="0.30">Retention</text>
<text x="40.20" y="614.00" textLength="106.00" lengthAdjust="spacingAndGlyphs" font-size="18.5" fill="#e6e8ee" stroke="#e6e8ee" stroke-width="0.30">Salesperson</text>
<text x="24.00" y="680.00" textLength="43.56" lengthAdjust="spacingAndGlyphs" font-size="18" fill="#e6e8ee" font-weight="700">CRM</text>
<text x="39.17" y="724.00" textLength="52.09" lengthAdjust="spacingAndGlyphs" font-size="18.5" fill="#e6e8ee" stroke="#e6e8ee" stroke-width="0.30">Leads</text>
<text x="39.16" y="763.00" textLength="68.75" lengthAdjust="spacingAndGlyphs" font-size="18.5" fill="#e6e8ee" stroke="#e6e8ee" stroke-width="0.30">Pipeline</text>
<text x="22.95" y="829.30" textLength="83.96" lengthAdjust="spacingAndGlyphs" font-size="18" fill="#e6e8ee" font-weight="700">FINANCE</text>
<text x="40.20" y="873.30" textLength="97.41" lengthAdjust="spacingAndGlyphs" font-size="18.5" fill="#e6e8ee" stroke="#e6e8ee" stroke-width="0.30">Accounting</text>
<text x="39.14" y="912.30" textLength="77.37" lengthAdjust="spacingAndGlyphs" font-size="18.5" fill="#e6e8ee" stroke="#e6e8ee" stroke-width="0.30">Invoicing</text>
<text x="39.16" y="951.20" textLength="97.36" lengthAdjust="spacingAndGlyphs" font-size="18.5" fill="#e6e8ee" stroke="#e6e8ee" stroke-width="0.30">Benchmark</text>
<text x="39.17" y="990.00" textLength="83.28" lengthAdjust="spacingAndGlyphs" font-size="18.5" fill="#e6e8ee" stroke="#e6e8ee" stroke-width="0.30">Expenses</text>
<text x="22.95" y="1056.00" textLength="101.86" lengthAdjust="spacingAndGlyphs" font-size="18" fill="#e6e8ee" font-weight="700">LOGISTICS</text>
<text x="40.20" y="1100.00" textLength="179.27" lengthAdjust="spacingAndGlyphs" font-size="18.5" fill="#e6e8ee" stroke="#e6e8ee" stroke-width="0.30">Warehouse Daily O...</text>
<text x="40.20" y="1139.00" textLength="159.26" lengthAdjust="spacingAndGlyphs" font-size="18.5" fill="#e6e8ee" stroke="#e6e8ee" stroke-width="0.30">Operation analysis</text>
<text x="383.00" y="245.20" textLength="91.56" lengthAdjust="spacingAndGlyphs" font-size="18.5" fill="#35383c" stroke="#35383c" stroke-width="0.30">Quotations</text>
<text x="462.68" y="300.00" textLength="72.96" lengthAdjust="spacingAndGlyphs" font-size="43" fill="#050505" stroke="#050505" stroke-width="0.55">389</text>
<text x="682.30" y="245.20" textLength="55.14" lengthAdjust="spacingAndGlyphs" font-size="18.5" fill="#35383c" stroke="#35383c" stroke-width="0.30">Orders</text>
<text x="760.26" y="300.00" textLength="73.07" lengthAdjust="spacingAndGlyphs" font-size="43" fill="#050505" stroke="#050505" stroke-width="0.55">666</text>
<text x="978.43" y="245.20" textLength="71.65" lengthAdjust="spacingAndGlyphs" font-size="18.5" fill="#35383c" stroke="#35383c" stroke-width="0.30">Revenue</text>
<text x="1009.77" y="300.00" textLength="174.15" lengthAdjust="spacingAndGlyphs" font-size="43" fill="#050505" stroke="#050505" stroke-width="0.55">₹13,620k</text>
<text x="1285.50" y="245.20" textLength="117.96" lengthAdjust="spacingAndGlyphs" font-size="18.5" fill="#35383c" stroke="#35383c" stroke-width="0.30">Average Order</text>
<text x="1324.01" y="300.00" textLength="149.79" lengthAdjust="spacingAndGlyphs" font-size="43" fill="#050505" stroke="#050505" stroke-width="0.55">₹20,451</text>
<text x="414.59" y="338.20" textLength="44.07" lengthAdjust="spacingAndGlyphs" font-size="21.2" fill="#158d4c" stroke="#158d4c" stroke-width="0.50">1.8%</text>
<text x="465.00" y="338.20" textLength="135.89" lengthAdjust="spacingAndGlyphs" font-size="18.5" fill="#4c4e52" stroke="#4c4e52" stroke-width="0.30">since last period</text>
<text x="713.50" y="338.20" textLength="42.86" lengthAdjust="spacingAndGlyphs" font-size="21.2" fill="#d4545e" stroke="#d4545e" stroke-width="0.50">5.7%</text>
<text x="763.00" y="338.20" textLength="135.89" lengthAdjust="spacingAndGlyphs" font-size="18.5" fill="#4c4e52" stroke="#4c4e52" stroke-width="0.30">since last period</text>
<text x="1015.50" y="338.20" textLength="42.86" lengthAdjust="spacingAndGlyphs" font-size="21.2" fill="#d4545e" stroke="#d4545e" stroke-width="0.50">4.7%</text>
<text x="1065.00" y="338.20" textLength="135.89" lengthAdjust="spacingAndGlyphs" font-size="18.5" fill="#4c4e52" stroke="#4c4e52" stroke-width="0.30">since last period</text>
<text x="1317.49" y="338.20" textLength="43.76" lengthAdjust="spacingAndGlyphs" font-size="21.2" fill="#158d4c" stroke="#158d4c" stroke-width="0.50">1.0%</text>
<text x="1367.80" y="338.20" textLength="135.89" lengthAdjust="spacingAndGlyphs" font-size="18.5" fill="#4c4e52" stroke="#4c4e52" stroke-width="0.30">since last period</text>
<text x="359.95" y="397.00" textLength="177.12" lengthAdjust="spacingAndGlyphs" font-size="27.5" fill="#0f6268" stroke="#0f6268" stroke-width="0.99">Monthly Sales</text>
<text x="1339.60" y="387.50" textLength="99.50" lengthAdjust="spacingAndGlyphs" font-size="14.2" fill="#ffffff" stroke="#ffffff" stroke-width="0.51">Average Order</text>
<text x="361.50" y="914.40" textLength="191.28" lengthAdjust="spacingAndGlyphs" font-size="27.3" fill="#0f6268" stroke="#0f6268" stroke-width="0.98">Top Quotations</text>
<text x="1132.50" y="914.30" textLength="212.55" lengthAdjust="spacingAndGlyphs" font-size="27.5" fill="#0f6268" stroke="#0f6268" stroke-width="0.99">Top Sales Orders</text>
<text x="360.52" y="952.00" textLength="87.21" lengthAdjust="spacingAndGlyphs" font-size="20.5" fill="#37393c" stroke="#37393c" stroke-width="0.74">Customer</text>
<text x="829.70" y="952.00" textLength="110.49" lengthAdjust="spacingAndGlyphs" font-size="20.5" fill="#37393c" stroke="#37393c" stroke-width="0.74">Salesperson</text>
<text x="967.37" y="952.00" textLength="76.51" lengthAdjust="spacingAndGlyphs" font-size="20.5" fill="#37393c" stroke="#37393c" stroke-width="0.74" clip-path="url(#cpRev)">Revenue</text>
<text x="1131.51" y="952.00" textLength="87.92" lengthAdjust="spacingAndGlyphs" font-size="20.5" fill="#37393c" stroke="#37393c" stroke-width="0.74">Customer</text>
<text x="1566.20" y="952.00" textLength="110.09" lengthAdjust="spacingAndGlyphs" font-size="20.5" fill="#37393c" stroke="#37393c" stroke-width="0.74">Salesperson</text>
<text x="1723.98" y="952.00" textLength="75.79" lengthAdjust="spacingAndGlyphs" font-size="20.5" fill="#37393c" stroke="#37393c" stroke-width="0.74">Revenue</text>
<text x="361.50" y="989.80" textLength="149.75" lengthAdjust="spacingAndGlyphs" font-size="18.2" fill="#0f6466" stroke="#0f6466" stroke-width="0.30">Aadhya Technology</text>
<text x="829.45" y="989.80" textLength="94.11" lengthAdjust="spacingAndGlyphs" font-size="18.2" fill="#3a3c40" stroke="#3a3c40" stroke-width="0.30">Keerti Singh</text>
<text x="958.40" y="989.80" textLength="95.51" lengthAdjust="spacingAndGlyphs" font-size="18.2" fill="#3a3c40" stroke="#3a3c40" stroke-width="0.30">₹347,234.40</text>
<text x="361.50" y="1028.75" textLength="173.41" lengthAdjust="spacingAndGlyphs" font-size="18.2" fill="#0f6466" stroke="#0f6466" stroke-width="0.30">SHRI MULTI SERVICES</text>
<text x="830.40" y="1028.75" textLength="95.88" lengthAdjust="spacingAndGlyphs" font-size="18.2" fill="#3a3c40" stroke="#3a3c40" stroke-width="0.30">Ajay Sharma</text>
<text x="958.40" y="1028.75" textLength="95.51" lengthAdjust="spacingAndGlyphs" font-size="18.2" fill="#3a3c40" stroke="#3a3c40" stroke-width="0.30">₹291,745.80</text>
<text x="361.50" y="1067.70" textLength="225.72" lengthAdjust="spacingAndGlyphs" font-size="18.2" fill="#0f6466" stroke="#0f6466" stroke-width="0.30">SHIVPOMIL CUTTING TOOLS</text>
<text x="829.45" y="1067.70" textLength="94.11" lengthAdjust="spacingAndGlyphs" font-size="18.2" fill="#3a3c40" stroke="#3a3c40" stroke-width="0.30">Keerti Singh</text>
<text x="958.40" y="1067.70" textLength="95.51" lengthAdjust="spacingAndGlyphs" font-size="18.2" fill="#3a3c40" stroke="#3a3c40" stroke-width="0.30">₹286,979.00</text>
<text x="361.50" y="1106.65" textLength="96.91" lengthAdjust="spacingAndGlyphs" font-size="18.2" fill="#0f6466" stroke="#0f6466" stroke-width="0.30">S T S TOOLS</text>
<text x="829.55" y="1106.65" textLength="127.32" lengthAdjust="spacingAndGlyphs" font-size="18.2" fill="#3a3c40" stroke="#3a3c40" stroke-width="0.30" clip-path="url(#cpMah)">Mahendra Singh</text>
<text x="958.40" y="1106.65" textLength="95.51" lengthAdjust="spacingAndGlyphs" font-size="18.2" fill="#3a3c40" stroke="#3a3c40" stroke-width="0.30">₹284,280.00</text>
<text x="1131.58" y="989.80" textLength="156.29" lengthAdjust="spacingAndGlyphs" font-size="18.2" fill="#0f6466" stroke="#0f6466" stroke-width="0.30">NNB TOOLS (INDIA)</text>
<text x="1565.24" y="989.80" textLength="132.45" lengthAdjust="spacingAndGlyphs" font-size="18.2" fill="#3a3c40" stroke="#3a3c40" stroke-width="0.30" clip-path="url(#cpBhu)">Bhupendra Lodhi</text>
<text x="1727.90" y="989.80" textLength="95.31" lengthAdjust="spacingAndGlyphs" font-size="18.2" fill="#3a3c40" stroke="#3a3c40" stroke-width="0.30">₹889,210.00</text>
<text x="1131.61" y="1028.75" textLength="227.81" lengthAdjust="spacingAndGlyphs" font-size="18.2" fill="#0f6466" stroke="#0f6466" stroke-width="0.30">PRECISION MACHINE TOOLS</text>
<text x="1566.20" y="1028.75" textLength="101.90" lengthAdjust="spacingAndGlyphs" font-size="18.2" fill="#3a3c40" stroke="#3a3c40" stroke-width="0.30">Vikram Lodhi</text>
<text x="1727.90" y="1028.75" textLength="95.31" lengthAdjust="spacingAndGlyphs" font-size="18.2" fill="#3a3c40" stroke="#3a3c40" stroke-width="0.30">₹297,730.00</text>
<text x="1131.64" y="1067.70" textLength="127.17" lengthAdjust="spacingAndGlyphs" font-size="18.2" fill="#0f6466" stroke="#0f6466" stroke-width="0.30">DC ENTERPRISE</text>
<text x="1566.20" y="1067.70" textLength="101.90" lengthAdjust="spacingAndGlyphs" font-size="18.2" fill="#3a3c40" stroke="#3a3c40" stroke-width="0.30">Vikram Lodhi</text>
<text x="1727.90" y="1067.70" textLength="95.31" lengthAdjust="spacingAndGlyphs" font-size="18.2" fill="#3a3c40" stroke="#3a3c40" stroke-width="0.30">₹204,170.70</text>
<text x="1132.50" y="1106.65" textLength="234.82" lengthAdjust="spacingAndGlyphs" font-size="18.2" fill="#0f6466" stroke="#0f6466" stroke-width="0.30">AKSHAR ENTERPRISE ANAND</text>
<text x="1565.25" y="1106.65" textLength="127.42" lengthAdjust="spacingAndGlyphs" font-size="18.2" fill="#3a3c40" stroke="#3a3c40" stroke-width="0.30">Mahendra Singh</text>
<text x="1727.90" y="1106.65" textLength="95.31" lengthAdjust="spacingAndGlyphs" font-size="18.2" fill="#3a3c40" stroke="#3a3c40" stroke-width="0.30">₹193,884.20</text>
<text x="1541.20" y="91.30" textLength="6.81" lengthAdjust="spacingAndGlyphs" font-size="14" fill="#ffffff" font-weight="700">5</text>
</svg>
<div class="abs" style="left:1837px;top:29.3px;width:21px;height:1px;background:#000"></div><div class="abs" style="left:43px;top:43px;width:1834px;height:1066px;box-shadow:0 0 0 3000px rgba(0,0,0,0.30)"></div>
</body></html>
